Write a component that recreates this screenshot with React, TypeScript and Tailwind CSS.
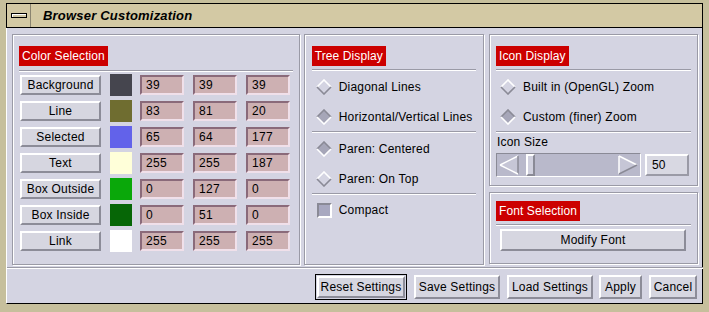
const font = { fontFamily: '"Liberation Sans", Arial, sans-serif' };

const colorRows = [
  { name: "Background", swatch: "#45454e", rgb: ["39", "39", "39"] },
  { name: "Line", swatch: "#6f6d30", rgb: ["83", "81", "20"] },
  { name: "Selected", swatch: "#6262ea", rgb: ["65", "64", "177"] },
  { name: "Text", swatch: "#ffffd9", rgb: ["255", "255", "187"] },
  { name: "Box Outside", swatch: "#0aa80a", rgb: ["0", "127", "0"] },
  { name: "Box Inside", swatch: "#066606", rgb: ["0", "51", "0"] },
  { name: "Link", swatch: "#ffffff", rgb: ["255", "255", "255"] },
];

function Header({ children }: { children: string }) {
  return (
    <div className="flex">
      <span className="bg-[#cc0000] text-white text-[12px] leading-[20px] h-[20px] px-[3px] tracking-[0.1px]">
        {children}
      </span>
    </div>
  );
}

function Sep() {
  return <div className="h-[2px] border-t border-[#9a9aa6] border-b border-b-white" />;
}

function Diamond({ on }: { on: boolean }) {
  return (
    <svg width="16" height="16" viewBox="0 0 16 16" className="shrink-0">
      <polygon points="8,1 15,8 8,15 1,8" fill={on ? "#a6a6b8" : "#d4d4e2"} />
      <polyline points="1,8 8,1 15,8" fill="none" stroke={on ? "#8a8a96" : "#ffffff"} strokeWidth="1.6" />
      <polyline points="1,8 8,15 15,8" fill="none" stroke={on ? "#ffffff" : "#8a8a96"} strokeWidth="1.6" />
    </svg>
  );
}

function Radio({ on, label }: { on: boolean; label: string }) {
  return (
    <div className="flex items-center gap-[7px] h-[20px] text-[12px] tracking-[0.2px] text-black">
      <Diamond on={on} />
      <span>{label}</span>
    </div>
  );
}

function RaisedButton({ label, className = "" }: { label: string; className?: string }) {
  return (
    <div
      className={`flex items-center justify-center bg-[#d6d6e0] border-2 border-t-white border-l-white border-r-[#8c8c98] border-b-[#8c8c98] text-[12px] tracking-[0.2px] text-black ${className}`}
    >
      {label}
    </div>
  );
}

function Field({ value }: { value: string }) {
  return (
    <div className="w-[44px] h-[20px] bg-[#cdb0b2] border-2 border-t-[#8a6a7a] border-l-[#8a6a7a] border-r-[#f0e0ea] border-b-[#f0e0ea] text-[12px] tracking-[0.3px] leading-[16px] pl-[4px] text-black">
      {value}
    </div>
  );
}

function Panel({ className = "", children }: { className?: string; children: React.ReactNode }) {
  return (
    <div className={`border border-[#9a9aa6] shadow-[inset_1px_1px_0_#ffffff,1px_1px_0_#ffffff] ${className}`}>
      {children}
    </div>
  );
}

export default function App() {
  return (
    <div style={font} className="w-[709px] h-[312px] bg-[#c6bf9c] pl-[6px] pr-[6px] pt-[3px] overflow-hidden">
      {/* title bar */}
      <div className="h-[25px] bg-[#d3c9a4] border border-black flex items-stretch">
        <div className="w-[24px] flex items-center justify-center border-r border-r-[#8a8470]">
          <div className="w-[16px] h-[5px] bg-[#d3c9a4] border border-black shadow-[inset_1px_1px_0_#fff]" />
        </div>
        <div className="pl-[12px] flex items-center text-[13px] font-bold italic text-black tracking-[0.2px]">
          Browser Customization
        </div>
      </div>

      {/* body */}
      <div className="h-[276px] bg-[#d4d4e2] border-r border-b border-black border-l border-l-white pl-[5px] pr-[4px] pt-[6px]">
        <div className="flex gap-[4px]">
          {/* Color Selection */}
          <Panel className="w-[289px] h-[231px] px-[6px] pt-[11px]">
            <Header>Color Selection</Header>
            <div className="mt-[4px]">
              <Sep />
            </div>
            <div className="flex flex-col gap-[6px] mt-[3px]">
              {colorRows.map((row) => (
                <div key={row.name} className="flex items-center h-[20px]">
                  <RaisedButton label={row.name} className="w-[81px] h-[20px] ml-[1px]" />
                  <div className="w-[22px] h-[22px] ml-[9px]" style={{ backgroundColor: row.swatch }} />
                  <div className="flex gap-[9px] ml-[8px]">
                    {row.rgb.map((v, i) => (
                      <Field key={i} value={v} />
                    ))}
                  </div>
                </div>
              ))}
            </div>
          </Panel>

          {/* Tree Display */}
          <Panel className="w-[181px] h-[231px] px-[7px] pt-[11px]">
            <Header>Tree Display</Header>
            <div className="mt-[3px]">
              <Sep />
            </div>
            <div className="pl-[4px] mt-[6px]">
              <Radio on={false} label="Diagonal Lines" />
            </div>
            <div className="pl-[4px] mt-[10px]">
              <Radio on label="Horizontal/Vertical Lines" />
            </div>
            <div className="mt-[4px]">
              <Sep />
            </div>
            <div className="pl-[4px] mt-[6px]">
              <Radio on label="Paren: Centered" />
            </div>
            <div className="pl-[4px] mt-[10px]">
              <Radio on={false} label="Paren: On Top" />
            </div>
            <div className="mt-[4px]">
              <Sep />
            </div>
            <div className="pl-[5px] mt-[7px] flex items-center gap-[7px] h-[16px] text-[12px] tracking-[0.2px]">
              <div className="w-[15px] h-[15px] bg-[#a8a8c0] border-2 border-t-[#8a8a96] border-l-[#8a8a96] border-r-white border-b-white" />
              <span>Compact</span>
            </div>
          </Panel>

          {/* right column */}
          <div className="flex flex-col gap-[6px] ml-[1px]">
            <Panel className="w-[209px] h-[152px] px-[6px] pt-[11px]">
              <Header>Icon Display</Header>
              <div className="mt-[3px]">
                <Sep />
              </div>
              <div className="pl-[4px] mt-[6px]">
                <Radio on={false} label="Built in (OpenGL) Zoom" />
              </div>
              <div className="pl-[4px] mt-[10px]">
                <Radio on label="Custom (finer) Zoom" />
              </div>
              <div className="mt-[4px]">
                <Sep />
              </div>
              <div className="text-[12px] tracking-[0.2px] mt-[2px] pl-[1px] leading-[14px]">Icon Size</div>
              <div className="flex items-center gap-[4px] mt-[4px]">
                <div className="w-[145px] h-[24px] bg-[#b9b9cb] border border-t-[#8a8a96] border-l-[#8a8a96] border-r-white border-b-white flex items-center">
                  <svg width="22" height="20" viewBox="0 0 22 20" className="ml-[1px]">
                    <polygon points="2,10 20,1 20,19" fill="#c6c6d6" />
                    <line x1="2" y1="10" x2="20" y2="1" stroke="#ffffff" strokeWidth="1.5" />
                    <line x1="20" y1="1" x2="20" y2="19" stroke="#8a8a96" strokeWidth="1.5" />
                    <line x1="2" y1="10" x2="20" y2="19" stroke="#ffffff" strokeWidth="1.5" />
                  </svg>
                  <div className="w-[9px] h-[22px] ml-[6px] bg-[#d0d0de] border-2 border-t-white border-l-white border-r-[#8a8a96] border-b-[#8a8a96]" />
                  <div className="flex-1" />
                  <svg width="22" height="20" viewBox="0 0 22 20" className="mr-[1px]">
                    <polygon points="2,1 20,10 2,19" fill="#c6c6d6" />
                    <line x1="2" y1="1" x2="20" y2="10" stroke="#ffffff" strokeWidth="1.5" />
                    <line x1="2" y1="1" x2="2" y2="19" stroke="#ffffff" strokeWidth="1.5" />
                    <line x1="2" y1="19" x2="20" y2="10" stroke="#8a8a96" strokeWidth="1.5" />
                  </svg>
                </div>
                <div className="w-[44px] h-[22px] bg-[#d8d8e2] border-2 border-t-white border-l-white border-r-[#9a9aa6] border-b-[#9a9aa6] text-[12px] leading-[18px] pl-[5px]">
                  50
                </div>
              </div>
            </Panel>

            <Panel className="w-[209px] h-[72px] px-[6px] pt-[8px]">
              <Header>Font Selection</Header>
              <div className="mt-[3px]">
                <Sep />
              </div>
              <RaisedButton label="Modify Font" className="w-[186px] h-[22px] ml-[4px] mt-[3px]" />
            </Panel>
          </div>
        </div>

        {/* bottom separator */}
        <div className="mt-[2px] -mx-[5px] h-[2px] border-t border-[#9a9aa6] border-b border-b-white" />

        {/* buttons */}
        <div className="flex justify-end gap-[6px] mt-[6px] pr-[1px]">
          <div className="border border-black p-[1px] -my-[1px]">
            <RaisedButton label="Reset Settings" className="w-[88px] h-[22px]" />
          </div>
          <RaisedButton label="Save Settings" className="w-[86px] h-[24px] ml-[1px]" />
          <RaisedButton label="Load Settings" className="w-[86px] h-[24px] ml-[1px]" />
          <RaisedButton label="Apply" className="w-[43px] h-[24px]" />
          <RaisedButton label="Cancel" className="w-[48px] h-[24px] ml-[1px]" />
        </div>
      </div>
    </div>
  );
}
